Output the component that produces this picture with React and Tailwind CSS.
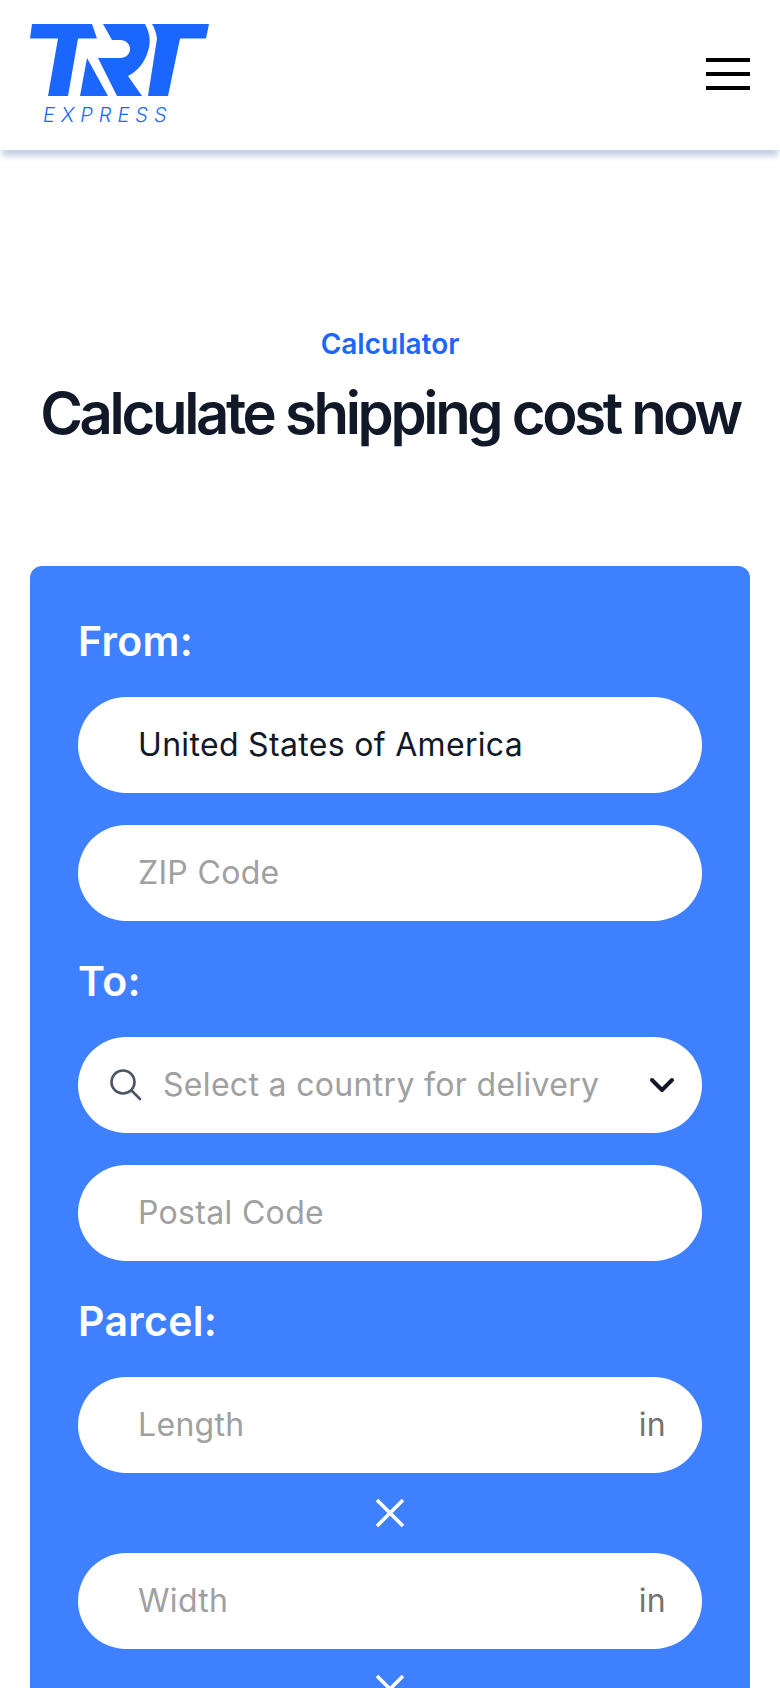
const Logo = () => (
  <svg width="180" height="72" viewBox="30 24 180 72" fill="#1a66ff">
    <path d="M32 24H92L97 38.5H78L68 96H48L58 38.5H30Z" />
    <path d="M87 58L80 96H108Z" />
    <path d="M103 24H145C150 33 151 42 148 51C145 62 138 71 128 76L142 96H117L98 58H120C126 58 130 54 130 49C130 44 126 40 120 40H112Z" />
    <path d="M152 24H209L206 38.5H180L168 96H148L157 38.5C156 33 155 29 152 24Z" />
  </svg>
);

const Field = ({ children, unit, dark }) => (
  <div className="flex h-24 items-center justify-between rounded-[48px] bg-white pl-[60px] pr-[36px]">
    <span className={dark ? "text-[#111827]" : "text-[#a0a0a0]"}>{children}</span>
    {unit && <span className="text-[#737373]">{unit}</span>}
  </div>
);

const Label = ({ children }) => (
  <div className="mb-[30px] mt-[34px] h-[52px] text-[41px] font-semibold leading-[52px] text-white">{children}</div>
);

const Times = () => (
  <div className="flex h-20 items-center justify-center">
    <svg width="30" height="30" viewBox="0 0 30 30" fill="none" stroke="white" strokeWidth="3.6">
      <path d="M2 2L28 28M28 2L2 28" />
    </svg>
  </div>
);

export default function App() {
  return (
    <div className="h-[1688px] overflow-hidden bg-white font-['Inter',sans-serif]">
      <header className="flex h-[150px] items-start justify-between bg-white pl-[30px] pr-[30px] pt-6 shadow-[0_8px_6px_-2px_rgba(60,100,170,0.3)]">
        <div className="flex flex-col">
          <Logo />
          <span className="ml-[13px] mt-[7px] text-[20px] font-light italic leading-[24px] tracking-[0.3em] text-[#1a66ff]">
            EXPRESS
          </span>
        </div>
        <button className="mt-[34px] flex w-11 flex-col gap-2.5">
          <span className="h-1 w-11 bg-black" />
          <span className="h-1 w-11 bg-black" />
          <span className="h-1 w-11 bg-black" />
        </button>
      </header>

      <section className="px-[30px] pt-[174px] text-center">
        <div className="text-[28px] font-semibold leading-10 text-[#1a66ff]">Calculator</div>
        <h1 className="mt-[14px] whitespace-nowrap text-[58px] font-semibold leading-[70px] tracking-[-0.057em] text-[#111827]">
          Calculate shipping cost now
        </h1>
      </section>

      <div className="mx-[30px] mt-[118px] rounded-xl bg-[#3f80ff] px-12 pb-24 pt-[15px] text-[32px] tracking-[0.01em]">
        <Label>From:</Label>
        <Field dark>United States of America</Field>
        <div className="mt-8">
          <Field>ZIP Code</Field>
        </div>
        <Label>To:</Label>
        <div className="flex h-24 items-center rounded-[48px] bg-white pl-8 pr-[26px]">
          <svg width="32" height="32" viewBox="0 0 32 32" fill="none" stroke="#4b5563" strokeWidth="2.6" strokeLinecap="round">
            <circle cx="13" cy="13" r="11.5" />
            <path d="M21.5 21.5L30 30" />
          </svg>
          <span className="ml-[21px] flex-1 whitespace-nowrap text-[#a0a0a0]">Select a country for delivery</span>
          <svg width="28" height="19" viewBox="0 0 28 19" fill="none" stroke="#111827" strokeWidth="4" strokeLinecap="round" strokeLinejoin="round">
            <path d="M4 4L14 14L24 4" />
          </svg>
        </div>
        <div className="mt-8">
          <Field>Postal Code</Field>
        </div>
        <Label>Parcel:</Label>
        <Field unit="in">Length</Field>
        <Times />
        <Field unit="in">Width</Field>
        <Times />
      </div>
    </div>
  );
}
